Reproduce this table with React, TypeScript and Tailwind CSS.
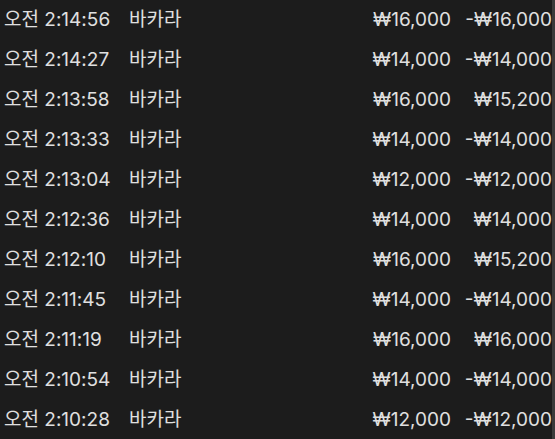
import React from "react";

const rows = [
  ["오전 2:14:56", "₩16,000", "-₩16,000"],
  ["오전 2:14:27", "₩14,000", "-₩14,000"],
  ["오전 2:13:58", "₩16,000", "₩15,200"],
  ["오전 2:13:33", "₩14,000", "-₩14,000"],
  ["오전 2:13:04", "₩12,000", "-₩12,000"],
  ["오전 2:12:36", "₩14,000", "₩14,000"],
  ["오전 2:12:10", "₩16,000", "₩15,200"],
  ["오전 2:11:45", "₩14,000", "-₩14,000"],
  ["오전 2:11:19", "₩16,000", "₩16,000"],
  ["오전 2:10:54", "₩14,000", "-₩14,000"],
  ["오전 2:10:28", "₩12,000", "-₩12,000"],
];

export default function App() {
  return (
    <div
      className="w-[555px] h-[439px] bg-[#1c1c1c] flex overflow-hidden text-[#e0e0e0] text-[19px]"
      style={{ fontFamily: '"Inter", "Noto Sans CJK KR", sans-serif' }}
    >
      <div className="flex-1 flex flex-col">
        {rows.map((r, i) => (
          <div key={i} className="h-[40px] shrink-0 flex items-center">
            <div className="w-[129px] pl-[4px] whitespace-nowrap">{r[0]}</div>
            <div className="flex-1 whitespace-nowrap">바카라</div>
            <div className="w-[110px] text-right whitespace-nowrap">{r[1]}</div>
            <div className="w-[101px] text-right whitespace-nowrap">{r[2]}</div>
          </div>
        ))}
      </div>
      <div className="w-[3px] bg-[#3a3a3a]" />
    </div>
  );
}
